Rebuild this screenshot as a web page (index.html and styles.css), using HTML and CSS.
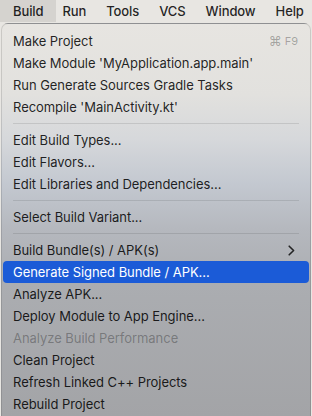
FILE: index.html
```html
<!DOCTYPE html>
<html lang="en">
<head>
<meta charset="utf-8">
<title>Build menu</title>
<link rel="stylesheet" href="styles.css">
</head>
<body>
<div class="screen">
  <nav class="menubar">
    <span class="bar-item active">Build</span>
    <span class="bar-item">Run</span>
    <span class="bar-item">Tools</span>
    <span class="bar-item">VCS</span>
    <span class="bar-item">Window</span>
    <span class="bar-item">Help</span>
  </nav>
  <div class="panel">
    <div class="item"><span>Make Project</span><span class="shortcut">&#8984;<span class="key">F9</span></span></div>
    <div class="item"><span>Make Module 'MyApplication.app.main'</span></div>
    <div class="item"><span>Run Generate Sources Gradle Tasks</span></div>
    <div class="item"><span>Recompile 'MainActivity.kt'</span></div>
    <div class="sep"></div>
    <div class="item"><span>Edit Build Types...</span></div>
    <div class="item"><span>Edit Flavors...</span></div>
    <div class="item"><span>Edit Libraries and Dependencies...</span></div>
    <div class="sep"></div>
    <div class="item"><span>Select Build Variant...</span></div>
    <div class="sep"></div>
    <div class="item"><span>Build Bundle(s) / APK(s)</span>
      <svg class="chevron" width="7" height="11" viewBox="0 0 7 11"><path d="M1.2 1.2 L5.6 5.5 L1.2 9.8" fill="none" stroke="currentColor" stroke-width="1.6" stroke-linecap="round" stroke-linejoin="round"/></svg>
    </div>
    <div class="item selected"><span>Generate Signed Bundle / APK...</span></div>
    <div class="item"><span>Analyze APK...</span></div>
    <div class="item"><span>Deploy Module to App Engine...</span></div>
    <div class="item disabled"><span>Analyze Build Performance</span></div>
    <div class="item"><span>Clean Project</span></div>
    <div class="item"><span>Refresh Linked C++ Projects</span></div>
    <div class="item"><span>Rebuild Project</span></div>
  </div>
</div>
</body>
</html>
```
FILE: styles.css
```css
html, body {
  margin: 0;
  padding: 0;
}
body {
  width: 312px;
  height: 416px;
  overflow: hidden;
  font-family: Inter, "Noto Sans", "Liberation Sans", sans-serif;
  font-size: 13px;
  color: rgba(0, 0, 0, 0.86);
}
.screen {
  width: 312px;
  height: 416px;
  background: #e8e6e2;
  overflow: hidden;
  display: flex;
  flex-direction: column;
}
.menubar {
  display: flex;
  height: 22px;
  align-items: stretch;
  background: #e8e6e2;
  flex: none;
}
.bar-item {
  display: flex;
  align-items: center;
  padding: 0 10px;
  font-weight: 500;
  letter-spacing: -0.1px;
}
.bar-item.active {
  padding: 0 13px;
  background: #d5d3cf;
  border-radius: 0 0 0 0;
}
.active + .bar-item {
  padding-left: 6px;
}
.panel {
  margin: 1px 1px 0 1px;
  padding: 6px 1px 0 1px;
  border: 1px solid rgba(0, 0, 0, 0.12);
  border-bottom: none;
  border-radius: 7px 7px 0 0;
  flex: 1;
  background: linear-gradient(to bottom,
    #e7e5e1 0px,
    #e2e1de 70px,
    #d6d8db 115px,
    #c3c8d0 160px,
    #b5b8be 205px,
    #abadb1 260px,
    #a3a4a7 392px);
}
.item {
  height: 22px;
  display: flex;
  align-items: center;
  justify-content: space-between;
  padding: 0 11px 0 10px;
  border-radius: 4px;
  letter-spacing: -0.05px;
  white-space: nowrap;
}
.item.selected {
  background: #1b5bd7;
  color: #ffffff;
}
.item.disabled {
  color: rgba(0, 0, 0, 0.3);
}
.shortcut {
  color: rgba(0, 0, 0, 0.3);
  font-size: 13px;
  display: flex;
  align-items: center;
  gap: 3px;
}
.key {
  font-size: 11px;
}
.chevron {
  color: rgba(0, 0, 0, 0.8);
  margin-right: 3px;
}
.sep {
  height: 1px;
  margin: 5px 10px 5px 10px;
  background: rgba(0, 0, 0, 0.1);
}
```
